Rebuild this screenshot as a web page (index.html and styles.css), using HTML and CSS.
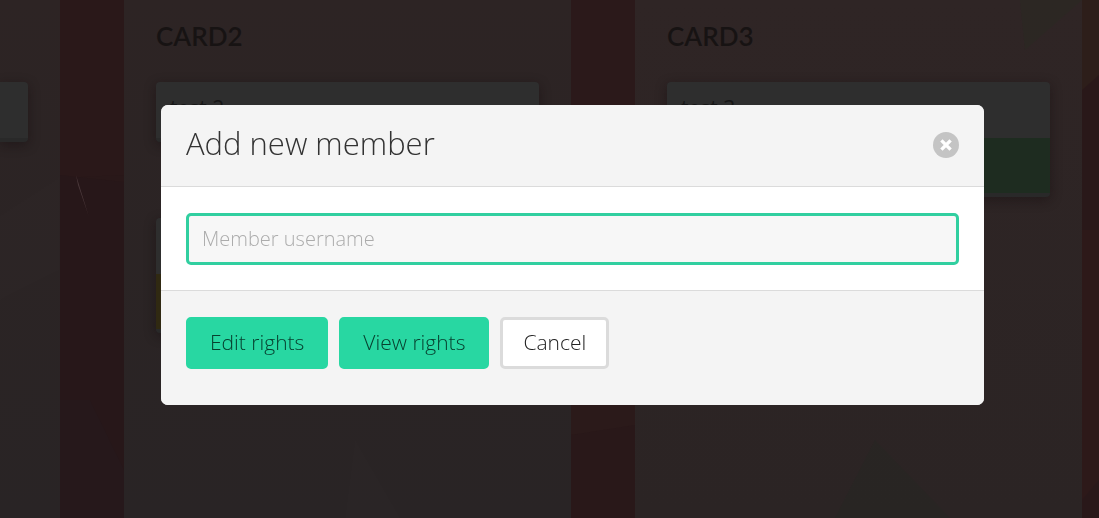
FILE: index.html
```html
<!DOCTYPE html>
<html lang="en">
<head>
<meta charset="utf-8">
<title>Board</title>
<link rel="stylesheet" href="styles.css">
</head>
<body>
<main class="board">
  <svg class="facets" viewBox="0 0 1099 518" preserveAspectRatio="none" aria-hidden="true">
    <path d="M59 0H124V175L59 178Z" fill="#2a1819"/>
    <path d="M59 175 124 182V518H59Z" fill="#271719"/>
    <path d="M59 400 90 400 124 470V518H59Z" fill="#26181b"/>
    <path d="M571 0H635V105H571Z" fill="#2b191a"/>
    <path d="M571 405H635V425L571 435Z" fill="#2b1a1a"/>
    <path d="M1082 0H1099V75L1082 90Z" fill="#2d1e1a"/>
    <path d="M1082 230H1099V480L1082 500Z" fill="#2d1919"/>
    <path d="M76 175 89 217 78 185Z" fill="#4b393b"/>
  </svg>
  <section class="column column-cut"><div class="card card-cut"></div></section>
  <section class="column">
    <h2 class="column-title">CARD2</h2>
    <article class="card"><p class="card-text">test 2</p></article>
    <article class="card card-lower"><p class="card-text">test</p><div class="label label-yellow"></div></article>
  </section>
  <section class="column column-warm">
    <h2 class="column-title">CARD3</h2>
    <article class="card"><p class="card-text">test 3</p><div class="label label-green"></div></article>
  </section>
  <svg class="facets" viewBox="0 0 1099 518" preserveAspectRatio="none" aria-hidden="true">
    <path d="M0 216 59 178V270L0 300Z" fill="#fff" opacity=".008"/>
    <path d="M355 440 400 518H345Z" fill="#fff" opacity=".008"/>
    <path d="M875 440 950 518H835Z" fill="#143020" opacity=".1"/>
    <path d="M1020 0H1082L1025 50Z" fill="#253020" opacity=".25"/>
  </svg>
</main>
<div class="overlay">
  <form class="modal" role="dialog" aria-modal="true" aria-labelledby="modal-title">
    <header class="modal-header">
      <h1 class="modal-title" id="modal-title">Add new member</h1>
      <button class="close" type="button" aria-label="Close">
        <svg viewBox="0 0 26 26" aria-hidden="true"><circle cx="13" cy="13" r="13" fill="#c4c4c4"/><path d="M9.6 9.6 16.4 16.4M16.4 9.6 9.6 16.4" stroke="#fff" stroke-width="3.4" stroke-linecap="square"/></svg>
      </button>
    </header>
    <div class="modal-body">
      <input class="field" type="text" aria-label="Member username" placeholder="Member username">
    </div>
    <footer class="modal-footer">
      <button class="button primary" type="button">Edit rights</button>
      <button class="button primary" type="button">View rights</button>
      <button class="button" type="button">Cancel</button>
    </footer>
  </form>
</div>
</body>
</html>
```
FILE: styles.css
```css
* {
  box-sizing: border-box;
}

body {
  margin: 0;
  overflow: hidden;
  background: #291819;
  color: #333;
  font-family: "Open Sans", "Noto Sans", sans-serif;
  font-weight: 300;
}

.board {
  position: relative;
  display: grid;
  grid-template-columns: 60px minmax(0, 1fr) minmax(0, 1fr);
  column-gap: 64px;
  min-height: 100vh;
  padding-right: 17px;
}

.facets {
  position: absolute;
  inset: 0;
  width: 100%;
  height: 100%;
}

.column {
  position: relative;
  padding: 18px 32px;
  background: linear-gradient(#2d2424, #292425);
}

.column-cut {
  padding-left: 0;
}

.column-warm {
  background: linear-gradient(#2f2525, #2b2424);
}

.column-title {
  margin: 0 0 28px;
  color: #171313;
  font-family: Lato, sans-serif;
  font-size: 26px;
  font-weight: 600;
  line-height: 36px;
}

.card {
  overflow: hidden;
  background: #2e2e2e;
  border-bottom: 4px solid #292929;
  border-radius: 4px;
  box-shadow: 0 3px 12px rgb(20 12 14 / 45%);
}

.card-cut {
  height: 60px;
  margin-top: 64px;
  border-top-left-radius: 0;
  border-bottom-left-radius: 0;
}

.card-lower {
  margin-top: 76px;
}

.card-text {
  margin: 0;
  padding: 10px 14px 14px;
  color: #171717;
  font-size: 21px;
  font-weight: 400;
  line-height: 32px;
}

.label {
  height: 55px;
}

.label-green {
  background: #1e2c20;
}

.label-yellow {
  background: #302912;
}

.overlay {
  position: fixed;
  inset: 0;
  display: flex;
  align-items: center;
  justify-content: center;
  padding: 0 0 8px 46px;
}

.modal {
  width: 100%;
  max-width: 823px;
  overflow: hidden;
  background: #fff;
  border-radius: 7px;
}

.modal-header {
  display: flex;
  align-items: center;
  justify-content: space-between;
  padding: 19px 25px 21px;
  background: #f4f4f4;
  border-bottom: 1px solid #dbdbdb;
}

.modal-title {
  margin: 0;
  padding-bottom: 2px;
  font-size: 31px;
  font-weight: 300;
  line-height: 39px;
}

.close {
  width: 26px;
  height: 26px;
  padding: 0;
  background: none;
  border: 0;
}

.close svg {
  display: block;
}

.modal-body {
  padding: 26px 25px 25px;
}

.field {
  display: block;
  width: 100%;
  height: 52px;
  padding: 0 13px 2px;
  background: #f7f7f7;
  border: 3px solid #31cfa0;
  border-radius: 5px;
  outline: 0;
  color: #333;
  font: inherit;
  font-size: 20px;
}

.field::placeholder {
  color: #acacac;
  opacity: 1;
}

.modal-footer {
  display: flex;
  gap: 11px;
  padding: 26px 25px 36px;
  background: #f4f4f4;
  border-top: 1px solid #dbdbdb;
}

.button {
  height: 52px;
  padding: 0 20px 2px;
  border: 3px solid #dbdbdb;
  border-radius: 5px;
  background: #fff;
  color: #222;
  font: inherit;
  font-size: 21px;
  white-space: nowrap;
}

.primary {
  padding: 0 21px 2px;
  background: #28d7a2;
  border-color: #28d7a2;
  color: #07402f;
}
```
